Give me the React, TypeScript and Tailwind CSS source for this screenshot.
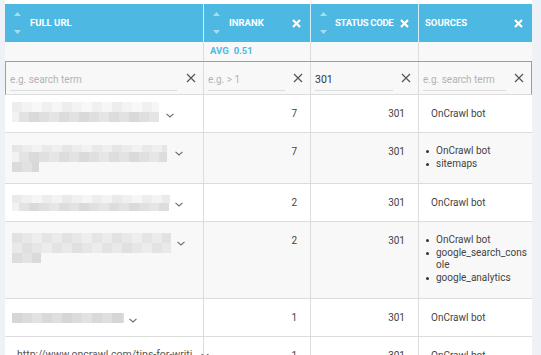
import React from "react";

type Line = { w: number; h: number; base: number; off?: number };
type Row = {
  h: number;
  bg: string;
  pt: number;
  lines?: Line[];
  text?: string;
  chev: { ml: number; mt: number };
  rank: number;
  sources: string[][];
};

const rows: Row[] = [
  {
    h: 38,
    bg: "bg-white",
    pt: 7,
    lines: [
      { w: 147, h: 10, base: 243 },
      { w: 140, h: 10, base: 223, off: 7 },
    ],
    chev: { ml: 7, mt: 11 },
    rank: 7,
    sources: [["OnCrawl bot"]],
  },
  {
    h: 51,
    bg: "bg-[#f8f8f8]",
    pt: 12,
    lines: [
      { w: 155, h: 7, base: 236 },
      { w: 148, h: 10, base: 224, off: 7 },
      { w: 27, h: 10, base: 222 },
    ],
    chev: { ml: 8, mt: 6 },
    rank: 7,
    sources: [["OnCrawl bot"], ["sitemaps"]],
  },
  {
    h: 38,
    bg: "bg-white",
    pt: 11,
    lines: [
      { w: 158, h: 8, base: 240 },
      { w: 150, h: 8, base: 224, off: 8 },
    ],
    chev: { ml: 5, mt: 7 },
    rank: 2,
    sources: [["OnCrawl bot"]],
  },
  {
    h: 77,
    bg: "bg-[#f8f8f8]",
    pt: 11,
    lines: [
      { w: 159, h: 10, base: 232 },
      { w: 159, h: 10, base: 230 },
      { w: 29, h: 10, base: 224 },
    ],
    chev: { ml: 6, mt: 8 },
    rank: 2,
    sources: [["OnCrawl bot"], ["google_search_cons", "ole"], ["google_analytics"]],
  },
  {
    h: 38,
    bg: "bg-white",
    pt: 14,
    lines: [{ w: 112, h: 10, base: 220 }],
    chev: { ml: 5, mt: 5 },
    rank: 1,
    sources: [["OnCrawl bot"]],
  },
  {
    h: 40,
    bg: "bg-white",
    pt: 10,
    text: "http://www.oncrawl.com/tips-for-writi",
    chev: { ml: 9, mt: 6 },
    rank: 1,
    sources: [["OnCrawl bot"]],
  },
];

function shade(base: number, i: number, j: number) {
  const v = base + (((i * 7 + j * 13) % 5) - 2) * 3;
  const c = Math.max(200, Math.min(248, v)).toString(16);
  return `#${c}${c}${c}`;
}

function Blur({ lines }: { lines: Line[] }) {
  return (
    <div className="flex flex-col">
      {lines.map((l, j) => {
        const cells = [];
        if (l.off) cells.push(<div key="o" className="h-full w-[7px] bg-[#f2f2f2]" />);
        const n = Math.ceil(l.w / 10);
        for (let i = 0; i < n; i++) {
          const w = i === n - 1 ? l.w - i * 10 : 10;
          cells.push(
            <div key={i} className="h-full" style={{ width: w, background: shade(l.base, i, j) }} />
          );
        }
        return (
          <div key={j} className="flex" style={{ height: l.h }}>
            {cells}
          </div>
        );
      })}
    </div>
  );
}

function Chevron() {
  return (
    <svg width="8" height="5" viewBox="0 0 8 5" className="shrink-0">
      <polyline points="0.5,0.8 4,4 7.5,0.8" fill="none" stroke="#6b6b6b" strokeWidth="1.1" />
    </svg>
  );
}

function SortArrows() {
  return (
    <div className="flex flex-col justify-between h-[22px] w-[7px] mr-[9px]">
      <svg width="7" height="4" viewBox="0 0 7 4">
        <polygon points="0,4 3.5,0 7,4" fill="#a9dcf1" />
      </svg>
      <svg width="7" height="4" viewBox="0 0 7 4">
        <polygon points="0,0 3.5,4 7,0" fill="#a9dcf1" />
      </svg>
    </div>
  );
}

function HeaderX() {
  return (
    <svg width="9" height="9" viewBox="0 0 9 9" className="shrink-0">
      <path d="M1 1 L8 8 M8 1 L1 8" stroke="white" strokeWidth="2.2" />
    </svg>
  );
}

function FilterX() {
  return (
    <svg width="10" height="10" viewBox="0 0 10 10" className="shrink-0">
      <path d="M1 1 L9 9 M9 1 L1 9" stroke="#555" strokeWidth="1.2" />
    </svg>
  );
}

function Filter({ value, placeholder, w, pl }: { value?: string; placeholder: string; w: number; pl: number }) {
  return (
    <div className="flex items-center h-full pr-[7px]" style={{ paddingLeft: pl }}>
      <div className="border-b border-[#dcdcdc] h-[22px] flex items-center mt-[4px]" style={{ width: w }}>
        {value ? (
          <span className="text-[10.5px] text-[#333]">{value}</span>
        ) : (
          <span className="text-[10px] text-[#b3b3b3]">{placeholder}</span>
        )}
      </div>
      <div className="ml-auto">
        <FilterX />
      </div>
    </div>
  );
}

const cols = "grid grid-cols-[199px_107px_108px_113px] shrink-0";

export default function App() {
  return (
    <div
      className="w-[541px] h-[355px] overflow-hidden bg-white flex"
      style={{ fontFamily: "Roboto, 'Liberation Sans', sans-serif" }}
    >
      <div className="w-[5px] shrink-0 bg-[#eef1f5]" />
      <div className="w-[527px] shrink-0 flex flex-col">
        <div className="h-[4px] shrink-0" />
        {/* header */}
        <div className={`${cols} h-[38px] bg-[#4db8e2] text-white text-[9.5px] font-bold`}>
          <div className="flex items-center pl-[9px] border-r border-[#d6eef8]">
            <SortArrows />
            <span>FULL URL</span>
          </div>
          <div className="flex items-center pl-[9px] pr-[9px] border-r border-[#d6eef8]">
            <SortArrows />
            <span>INRANK</span>
            <div className="ml-auto">
              <HeaderX />
            </div>
          </div>
          <div className="flex items-center pl-[9px] pr-[9px] border-r border-[#d6eef8]">
            <SortArrows />
            <span className="-ml-[1px] tracking-[-0.3px]">STATUS CODE</span>
            <div className="ml-auto">
              <HeaderX />
            </div>
          </div>
          <div className="flex items-center pl-[6px] pr-[9px]">
            <span>SOURCES</span>
            <div className="ml-auto">
              <HeaderX />
            </div>
          </div>
        </div>
        {/* avg row */}
        <div className={`${cols} h-[20px] bg-[#f8f8f8] border-b border-[#4db8e2]`}>
          <div className="border-r border-[#dcdcdc]" />
          <div className="border-r border-[#dcdcdc] flex items-center pl-[6px] text-[9.5px] font-bold text-[#4db8e2]">
            AVG <span className="ml-[5px]">0.51</span>
          </div>
          <div className="border-r border-[#dcdcdc]" />
          <div />
        </div>
        {/* filter row */}
        <div className="grid grid-cols-[198px_107px_108px_112px] shrink-0 h-[33px] bg-[#f8f8f8] border-b border-b-[#dcdcdc] border-x border-x-[#4db8e2]">
          <div className="border-r border-[#dcdcdc]">
            <Filter placeholder="e.g. search term" w={167} pl={4} />
          </div>
          <div className="border-r border-[#dcdcdc]">
            <Filter placeholder="e.g. > 1" w={77} pl={4} />
          </div>
          <div className="border-r border-[#dcdcdc]">
            <Filter value="301" placeholder="" w={78} pl={4} />
          </div>
          <div>
            <Filter placeholder="e.g. search term" w={83} pl={4} />
          </div>
        </div>
        {/* data rows */}
        {rows.map((r, idx) => (
          <div
            key={idx}
            className={`${cols} ${r.bg} border-b border-[#dcdcdc] text-[10px] text-[#444]`}
            style={{ height: r.h }}
          >
            <div className="border-r border-[#dcdcdc] flex items-start pl-[7px]" style={{ paddingTop: r.pt }}>
              {r.lines ? (
                <Blur lines={r.lines} />
              ) : (
                <span className="pl-[5px] text-[10.5px] text-[#555] whitespace-nowrap">{r.text}</span>
              )}
              <div style={{ marginLeft: r.chev.ml, marginTop: r.chev.mt }}>
                <Chevron />
              </div>
            </div>
            <div className="border-r border-[#dcdcdc] text-right pr-[13px] pt-[12px] leading-[13px]">{r.rank}</div>
            <div className="border-r border-[#dcdcdc] text-right pr-[13px] pt-[12px] leading-[13px]">301</div>
            <div className="pt-[12px]">
              {r.sources.length === 1 ? (
                <div className="pl-[12px] leading-[13px]">{r.sources[0][0]}</div>
              ) : (
                <ul className="pl-[7px]">
                  {r.sources.map((s, k) => (
                    <li key={k} className="flex leading-[12.5px]">
                      <span className="w-[10px] shrink-0 flex items-start pt-[5px]">
                        <span className="w-[3px] h-[3px] rounded-full bg-[#333]" />
                      </span>
                      <span>
                        {s.map((t, m) => (
                          <div key={m}>{t}</div>
                        ))}
                      </span>
                    </li>
                  ))}
                </ul>
              )}
            </div>
          </div>
        ))}
      </div>
      <div className="flex-1 bg-[#eef1f6]" />
    </div>
  );
}
